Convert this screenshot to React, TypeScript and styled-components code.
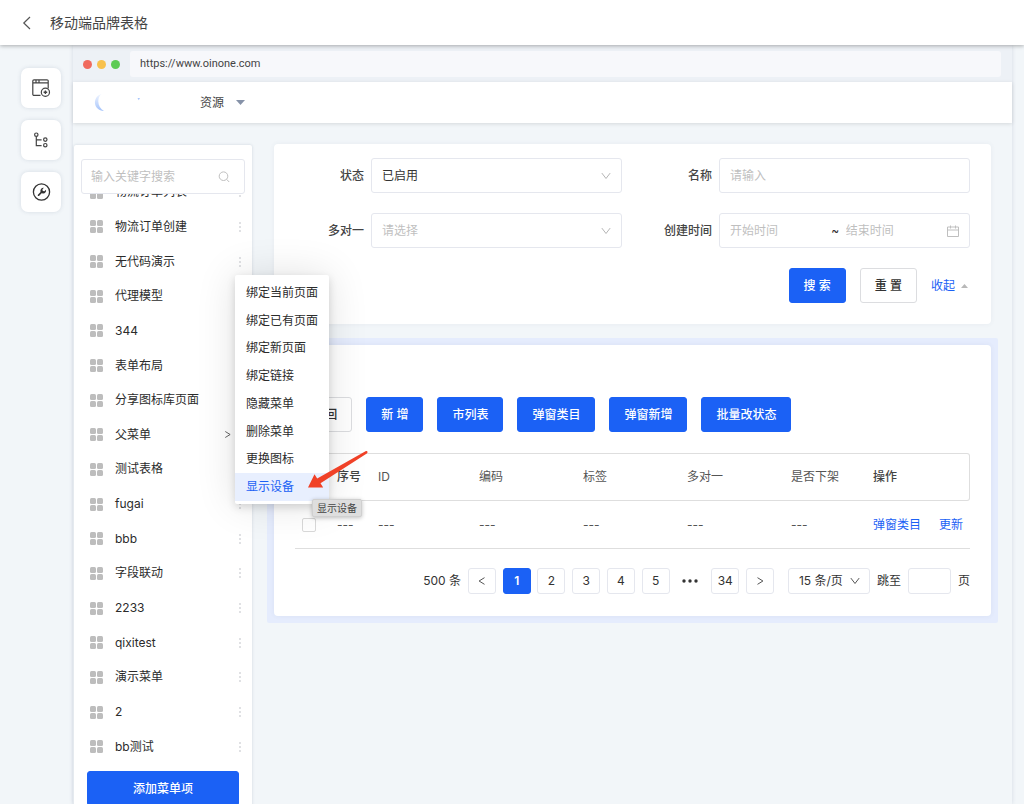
import React from 'react';
import styled, { createGlobalStyle, css } from 'styled-components';

const blue = '#1b61f5';
const line = '#e5e7ee';

const GlobalStyle = createGlobalStyle`
  *, *::before, *::after { box-sizing: border-box; }
  body {
    margin: 0;
    background: #f2f6f9;
    color: #333;
    font: 400 12px/18px Inter, "Noto Sans CJK SC", sans-serif;
  }
  button, input, select { font: inherit; color: inherit; margin: 0; }
  button { cursor: pointer; }
  a { color: ${blue}; text-decoration: none; }
  ul { list-style: none; margin: 0; padding: 0; }
`;

const Shell = styled.div`
  height: 100vh;
  overflow: hidden;
  display: flex;
  flex-direction: column;
`;

const TopBar = styled.header`
  flex: none;
  height: 45px;
  padding: 0 20px;
  display: flex;
  align-items: center;
  gap: 16px;
  background: #fff;
  box-shadow: 0 1px 4px rgba(0, 0, 0, 0.3);
  position: relative;
  z-index: 5;
`;

const Title = styled.h1`
  margin: 0;
  font-size: 14px;
  line-height: 20px;
  font-weight: 400;
  color: #444;
`;

const PlainButton = styled.button`
  display: flex;
  align-items: center;
  padding: 0;
  border: 0;
  background: none;
`;

const Workspace = styled.div`
  flex: 1;
  min-height: 0;
  display: flex;
`;

const Rail = styled.nav`
  flex: none;
  width: 73px;
  padding: 23px 0 0 21px;
  display: flex;
  flex-direction: column;
  gap: 12px;
`;

const Tile = styled.button`
  width: 40px;
  height: 40px;
  padding: 0;
  display: grid;
  place-items: center;
  border: 0;
  border-radius: 7px;
  background: #fff;
  box-shadow: 0 0 4px rgba(70, 90, 120, 0.16);
`;

const Frame = styled.div`
  flex: 1;
  min-width: 0;
  margin-right: 12px;
  display: flex;
  flex-direction: column;
  box-shadow: 0 0 4px rgba(70, 90, 120, 0.18);
`;

const AddressBar = styled.div`
  flex: none;
  height: 37px;
  padding: 6px 11px 5px 10px;
  display: flex;
  align-items: center;
  gap: 10px;
  background: #edf1f6;
`;

const Lights = styled.div`
  display: flex;
  gap: 5px;
`;

const Light = styled.span<{ $color: string }>`
  width: 9px;
  height: 9px;
  border-radius: 50%;
  background: ${(p) => p.$color};
`;

const Address = styled.div`
  flex: 1;
  height: 26px;
  padding: 0 10px;
  border-radius: 3px;
  background: #f7f8fb;
  font-family: Roboto, sans-serif;
  font-size: 11px;
  line-height: 26px;
  color: #444;
`;

const NavBar = styled.div`
  flex: none;
  height: 41px;
  padding: 0 21px;
  display: flex;
  align-items: center;
  gap: 56px;
  background: #fff;
  box-shadow: 0 1px 4px rgba(0, 0, 0, 0.12);
`;

const NavMenu = styled(PlainButton)`
  gap: 12px;
  color: #444;
`;

const Stage = styled.div`
  flex: 1;
  min-height: 0;
  padding: 21px 14px 0 1px;
  display: flex;
  align-items: flex-start;
  gap: 15px;
`;

const Sidebar = styled.aside`
  position: relative;
  z-index: 2;
  flex: none;
  width: 178px;
  margin-top: 1px;
  padding: 14px 7px 0;
  background: #fff;
  border-radius: 2px;
  box-shadow: 0 0 3px rgba(70, 90, 120, 0.22);
`;

const Field = styled.div`
  flex: 1;
  min-width: 0;
  height: 35px;
  padding: 0 10px;
  display: flex;
  align-items: center;
  border: 1px solid ${line};
  border-radius: 3px;
  background: #fff;
`;

const Input = styled.input`
  flex: 1;
  min-width: 0;
  width: 0;
  height: 100%;
  padding: 0;
  border: 0;
  outline: 0;
  background: transparent;
  &::placeholder { color: #bfbfbf; opacity: 1; }
`;

const Select = styled.select<{ $empty?: boolean }>`
  flex: 1;
  min-width: 0;
  height: 100%;
  padding: 0;
  border: 0;
  outline: 0;
  appearance: none;
  background: transparent;
  color: ${(p) => (p.$empty ? '#bfbfbf' : '#333')};
`;

const SearchField = styled(Field)`
  padding: 0 14px 0 9px;
`;

const MenuViewport = styled.div`
  height: 570px;
  margin-bottom: 7px;
  display: flex;
  flex-direction: column;
  justify-content: flex-end;
  overflow: hidden;
`;

const MenuList = styled.ul`
  flex: none;
  height: 589px;
  display: grid;
  grid-auto-rows: 1fr;
`;

const MenuRow = styled.li`
  padding: 0 3px 0 9px;
  display: flex;
  align-items: center;
  gap: 12px;
  color: #2b2b2b;
`;

const MenuName = styled.span`
  flex: 1;
`;

const RowActions = styled.span`
  display: flex;
  align-items: center;
  gap: 6px;
`;

const buttonBase = css`
  height: 35px;
  padding: 0 14px;
  border-radius: 3px;
  font-weight: 500;
  white-space: nowrap;
`;

const Button = styled.button<{ $primary?: boolean }>`
  ${buttonBase}
  border: 1px solid ${(p) => (p.$primary ? blue : '#dcdde0')};
  background: ${(p) => (p.$primary ? blue : '#fff')};
  color: ${(p) => (p.$primary ? '#fff' : '#333')};
`;

const AddButton = styled(Button)`
  display: block;
  width: 152px;
  margin: 0 auto 14px;
`;

const Popup = styled.div`
  position: absolute;
  left: 161px;
  top: 130px;
  width: 94px;
  padding: 4px 0 3px;
  background: #fff;
  border-radius: 2px;
  box-shadow: 0 3px 8px rgba(0, 0, 0, 0.14), 0 0 40px rgba(0, 0, 0, 0.12);
`;

const PopupList = styled.ul`
  height: 222px;
  display: grid;
  grid-auto-rows: 1fr;
`;

const PopupItem = styled.button<{ $active?: boolean }>`
  width: 100%;
  height: 100%;
  padding: 0 11px;
  border: 0;
  text-align: left;
  white-space: nowrap;
  background: ${(p) => (p.$active ? '#e8effe' : 'transparent')};
  color: ${(p) => (p.$active ? blue : '#2b2b2b')};
`;

const Tooltip = styled.span`
  position: absolute;
  left: 77px;
  top: 224px;
  padding: 0 4px;
  border: 1px solid #d0d0d0;
  border-radius: 2px;
  background: #dedede;
  box-shadow: 0 1px 4px rgba(0, 0, 0, 0.25);
  font-size: 10px;
  line-height: 16px;
  color: #444;
  white-space: nowrap;
`;

const Pointer = styled.svg`
  position: absolute;
  left: 73px;
  top: 175px;
`;

const Main = styled.main`
  flex: 1;
  min-width: 0;
  display: flex;
  flex-direction: column;
  gap: 14px;
`;

const Card = styled.section`
  background: #fff;
  border-radius: 4px;
  box-shadow: 0 0 5px rgba(70, 90, 120, 0.07);
`;

const FilterCard = styled(Card)`
  margin: 0 7px;
  padding: 14px 21px 21px;
`;

const Filters = styled.form`
  display: grid;
  grid-template-columns: 1fr 1fr;
  gap: 20px 21px;
`;

const FormItem = styled.div`
  display: flex;
  align-items: center;
`;

const Label = styled.label`
  flex: none;
  width: 76px;
  padding-right: 7px;
  text-align: right;
  font-weight: 500;
  color: #444;
`;

const FormActions = styled.div`
  grid-column: 1 / -1;
  display: flex;
  justify-content: flex-end;
  align-items: center;
  gap: 14px;
`;

const Collapse = styled.a`
  padding-right: 2px;
  display: flex;
  align-items: center;
  gap: 6px;
`;

const Selected = styled.div`
  padding: 7px;
  background: #e5ecfd;
  border-radius: 2px;
`;

const TableCard = styled(Card)`
  padding: 52px 21px 22px;
`;

const Toolbar = styled.div`
  display: flex;
  gap: 14px;
  margin-bottom: 21px;
`;

const Table = styled.table`
  width: 100%;
  table-layout: fixed;
  border-collapse: separate;
  border-spacing: 0;
  color: #555;
  th, td {
    height: 48px;
    padding: 0 0 0 7px;
    text-align: left;
    font-weight: 400;
    white-space: nowrap;
    border-bottom: 1px solid #dedede;
  }
  th { border-top: 1px solid #dedede; }
  th:first-child { border-left: 1px solid #dedede; border-radius: 3px 0 0 3px; }
  th:last-child { border-right: 1px solid #dedede; border-radius: 0 3px 3px 0; }
`;

const StrongTh = styled.th`
  && { font-weight: 500; color: #444; }
`;

const Check = styled.input`
  display: block;
  appearance: none;
  width: 14px;
  height: 14px;
  margin: 0;
  border: 1px solid #d9d9d9;
  border-radius: 2px;
  background: #fff;
`;

const Links = styled.div`
  display: flex;
  gap: 18px;
`;

const Pager = styled.nav`
  margin-top: 19px;
  display: flex;
  justify-content: flex-end;
  align-items: center;
  gap: 7px;
`;

const Pages = styled.div`
  width: 306px;
  margin-right: 7px;
  display: flex;
  justify-content: space-between;
  align-items: center;
`;

const Page = styled.button<{ $active?: boolean }>`
  width: 28px;
  height: 26px;
  padding: 0;
  display: grid;
  place-items: center;
  border: 1px solid ${(p) => (p.$active ? blue : line)};
  border-radius: 3px;
  background: ${(p) => (p.$active ? blue : '#fff')};
  color: ${(p) => (p.$active ? '#fff' : '#333')};
  font-weight: ${(p) => (p.$active ? 600 : 400)};
`;

const Dots = styled.span`
  width: 28px;
  display: flex;
  justify-content: center;
`;

const PageSize = styled(Field)`
  flex: none;
  width: 82px;
  height: 26px;
  padding: 0 9px 0 10px;
`;

const JumpInput = styled.input`
  width: 43px;
  height: 26px;
  padding: 0 6px;
  border: 1px solid ${line};
  border-radius: 3px;
`;

const Chevron = ({ dir, size = 10, color = '#555' }: { dir: 'left' | 'right' | 'down'; size?: number; color?: string }) => {
  const d = { left: 'M9 2 2.5 6 9 10', right: 'M3 2l6.5 4L3 10', down: 'M1 2.5 6 9l5-6.5' }[dir];
  return (
    <svg width={size} height={size} viewBox="0 0 12 12" fill="none" stroke={color} strokeWidth="1.2">
      <path d={d} />
    </svg>
  );
};

const BackIcon = () => (
  <svg width="14" height="14" viewBox="0 0 14 14" fill="none" stroke="#555" strokeWidth="1.2">
    <path d="M10 1 3.8 7l6.2 6" />
  </svg>
);

const PageIcon = () => (
  <svg width="20" height="20" viewBox="0 0 20 20" fill="none" stroke="#444" strokeWidth="1.2">
    <path d="M9.5 17.4H3A1.2 1.2 0 0 1 1.8 16.2V3A1.2 1.2 0 0 1 3 1.8h13A1.2 1.2 0 0 1 17.2 3v7.5M1.8 4.9h15.4M5 1.8v3M8 1.8v3" />
    <circle cx="14.4" cy="14.2" r="4.1" />
    <path d="M14.4 12.4V16M12.6 14.2h3.6" strokeWidth="1.4" />
  </svg>
);

const TreeIcon = () => (
  <svg width="20" height="20" viewBox="0 0 20 20" fill="none" stroke="#444" strokeWidth="1.2">
    <circle cx="5.3" cy="4.7" r="1.7" />
    <circle cx="14.3" cy="9.6" r="1.7" />
    <circle cx="14.3" cy="15.2" r="1.7" />
    <path d="M5.3 6.4v9.3h5.3M5.3 9.8h5.3" />
  </svg>
);

const WrenchIcon = () => (
  <svg width="20" height="20" viewBox="0 0 20 20">
    <circle cx="10.5" cy="10" r="8.1" fill="none" stroke="#333" strokeWidth="1.3" />
    <path
      fill="#333"
      d="M12.9 5.7 11.4 7.4 11.8 9 13.4 9.3 15 7.7C15.5 9.6 14.2 11.4 12.3 11.4L10.6 11.3 8 13.9C7.3 14.6 6.2 13.5 6.9 12.8L9.5 10.1C8.9 7.4 10.6 5.4 12.9 5.7Z"
    />
  </svg>
);

const LogoMark = () => (
  <svg width="50" height="20" viewBox="0 0 50 20">
    <defs>
      <linearGradient id="crescent" x1="0" y1="0" x2="0" y2="1">
        <stop offset="0" stopColor="#f0f5ff" />
        <stop offset="1" stopColor="#a4c3fb" />
      </linearGradient>
    </defs>
    <path d="M7.5 1C2.500 2.5.6 6.500 1 10.500 1.500 14.500 4.500 17.500 10 18 6.500 16 4.400 12.500 4.300 8.500 4.300 5 5.500 2.500 7.500 1Z" fill="url(#crescent)" />
    <path d="M43.500 5h2.500l-1.200 2.200z" fill="#a9c6fb" />
  </svg>
);

const Caret = ({ up }: { up?: boolean }) => (
  <svg width={up ? 7 : 9} height={up ? 4 : 5} viewBox="0 0 8 5" preserveAspectRatio="none">
    <path d={up ? 'M0 5 4 0l4 5z' : 'M0 0h8L4 5z'} fill={up ? '#b8b8b8' : '#8692a8'} />
  </svg>
);

const SearchIcon = () => (
  <svg width="12" height="12" viewBox="0 0 12 12" fill="none" stroke="#bfbfbf">
    <circle cx="5.500" cy="5.200" r="4.300" />
    <path d="m8.600 8.300 2.600 2.700" />
  </svg>
);

const GridIcon = () => (
  <svg width="13" height="13" viewBox="0 0 13 13" fill="#bdbdbd">
    {[0, 7].map((x) => [0, 7].map((y) => <rect key={`${x}-${y}`} x={x} y={y} width="6" height="6" rx="1.500" />))}
  </svg>
);

const MoreIcon = () => (
  <svg width="4" height="10" viewBox="0 0 4 10" fill="#a9adb5">
    {[1, 5, 9].map((y) => <circle key={y} cx="2" cy={y} r="0.700" />)}
  </svg>
);

const CalendarIcon = () => (
  <svg width="12" height="12" viewBox="0 0 12 12" fill="none" stroke="#bfbfbf">
    <path d="M.5 2h11v9.500H.5zM.5 5h11M3.500.5v3M8.500.5v3" />
  </svg>
);

const menus = [
  '物流订单列表', '物流订单创建', '无代码演示', '代理模型', '344', '表单布局', '分享图标库页面', '父菜单', '测试表格',
  'fugai', 'bbb', '字段联动', '2233', 'qixitest', '演示菜单', '2', 'bb测试',
];
const popupItems = ['绑定当前页面', '绑定已有页面', '绑定新页面', '绑定链接', '隐藏菜单', '删除菜单', '更换图标', '显示设备'];
const actions = ['新 增', '市列表', '弹窗类目', '弹窗新增', '批量改状态'];
const columnWidths = [35, 41, 101, 104, 104, 104, 82];

export default function App() {
  return (
    <>
      <GlobalStyle />
      <Shell>
        <TopBar>
          <PlainButton aria-label="返回"><BackIcon /></PlainButton>
          <Title>移动端品牌表格</Title>
        </TopBar>
        <Workspace>
          <Rail>
            <Tile aria-label="页面"><PageIcon /></Tile>
            <Tile aria-label="结构"><TreeIcon /></Tile>
            <Tile aria-label="设置"><WrenchIcon /></Tile>
          </Rail>
          <Frame>
            <AddressBar>
              <Lights>
                <Light $color="#f06a5e" />
                <Light $color="#f8c14d" />
                <Light $color="#5dcb55" />
              </Lights>
              <Address>https://www.oinone.com</Address>
            </AddressBar>
            <NavBar>
              <LogoMark />
              <NavMenu>资源 <Caret /></NavMenu>
            </NavBar>
            <Stage>
              <Sidebar>
                <SearchField>
                  <Input aria-label="搜索菜单" placeholder="输入关键字搜索" />
                  <SearchIcon />
                </SearchField>
                <MenuViewport>
                  <MenuList>
                    {menus.map((name) => (
                      <MenuRow key={name}>
                        <GridIcon />
                        <MenuName>{name}</MenuName>
                        <RowActions>
                          {name === '父菜单' && <Chevron dir="right" size={9} />}
                          <MoreIcon />
                        </RowActions>
                      </MenuRow>
                    ))}
                  </MenuList>
                </MenuViewport>
                <AddButton $primary>添加菜单项</AddButton>
                <Popup>
                  <PopupList>
                    {popupItems.map((item) => (
                      <li key={item}>
                        <PopupItem $active={item === '显示设备'}>{item}</PopupItem>
                      </li>
                    ))}
                  </PopupList>
                  <Tooltip role="tooltip">显示设备</Tooltip>
                  <Pointer width="61" height="40" viewBox="0 0 61 40">
                    <path
                      d="M0 37.500 6.500 24.200 9.200 28.600 57.500 1.300C59.500.3 60.300 2.500 58.800 3.600L12.500 33.200 15.200 37.600Z"
                      fill="#f04127"
                    />
                  </Pointer>
                </Popup>
              </Sidebar>
              <Main>
                <FilterCard>
                  <Filters onSubmit={(e) => e.preventDefault()}>
                    <FormItem>
                      <Label htmlFor="status">状态</Label>
                      <Field>
                        <Select id="status"><option>已启用</option></Select>
                        <Chevron dir="down" color="#b5b5b5" />
                      </Field>
                    </FormItem>
                    <FormItem>
                      <Label htmlFor="name">名称</Label>
                      <Field><Input id="name" placeholder="请输入" /></Field>
                    </FormItem>
                    <FormItem>
                      <Label htmlFor="relation">多对一</Label>
                      <Field>
                        <Select id="relation" $empty><option>请选择</option></Select>
                        <Chevron dir="down" color="#b5b5b5" />
                      </Field>
                    </FormItem>
                    <FormItem>
                      <Label htmlFor="start">创建时间</Label>
                      <Field>
                        <Input id="start" placeholder="开始时间" />
                        <span>~&nbsp;&nbsp;</span>
                        <Input aria-label="结束时间" placeholder="结束时间" />
                        <CalendarIcon />
                      </Field>
                    </FormItem>
                    <FormActions>
                      <Button $primary type="submit">搜 索</Button>
                      <Button type="reset">重 置</Button>
                      <Collapse href="#">收起 <Caret up /></Collapse>
                    </FormActions>
                  </Filters>
                </FilterCard>
                <Selected>
                  <TableCard>
                    <Toolbar>
                      <Button>返 回</Button>
                      {actions.map((a) => <Button key={a} $primary>{a}</Button>)}
                    </Toolbar>
                    <Table>
                      <colgroup>
                        {columnWidths.map((w, i) => <col key={i} width={w} />)}
                        <col />
                      </colgroup>
                      <thead>
                        <tr>
                          <th><Check type="checkbox" aria-label="全选" /></th>
                          <StrongTh>序号</StrongTh>
                          <th>ID</th>
                          <th>编码</th>
                          <th>标签</th>
                          <th>多对一</th>
                          <th>是否下架</th>
                          <StrongTh>操作</StrongTh>
                        </tr>
                      </thead>
                      <tbody>
                        <tr>
                          <td><Check type="checkbox" aria-label="选择此行" /></td>
                          {[0, 1, 2, 3, 4, 5].map((i) => <td key={i}>---</td>)}
                          <td>
                            <Links>
                              <a href="#">弹窗类目</a>
                              <a href="#">更新</a>
                            </Links>
                          </td>
                        </tr>
                      </tbody>
                    </Table>
                    <Pager aria-label="分页">
                      <span>500 条</span>
                      <Pages>
                        <Page aria-label="上一页"><Chevron dir="left" /></Page>
                        {[1, 2, 3, 4, 5].map((n) => <Page key={n} $active={n === 1}>{n}</Page>)}
                        <Dots>
                          <svg width="18" height="4" viewBox="0 0 18 4" fill="#333">
                            {[3, 9, 15].map((x) => <circle key={x} cx={x} cy="2" r="1.700" />)}
                          </svg>
                        </Dots>
                        <Page>34</Page>
                        <Page aria-label="下一页"><Chevron dir="right" /></Page>
                      </Pages>
                      <PageSize>
                        <Select aria-label="每页条数"><option>15 条/页</option></Select>
                        <Chevron dir="down" />
                      </PageSize>
                      <label htmlFor="jump">跳至</label>
                      <JumpInput id="jump" />
                      <span>页</span>
                    </Pager>
                  </TableCard>
                </Selected>
              </Main>
            </Stage>
          </Frame>
        </Workspace>
      </Shell>
    </>
  );
}
